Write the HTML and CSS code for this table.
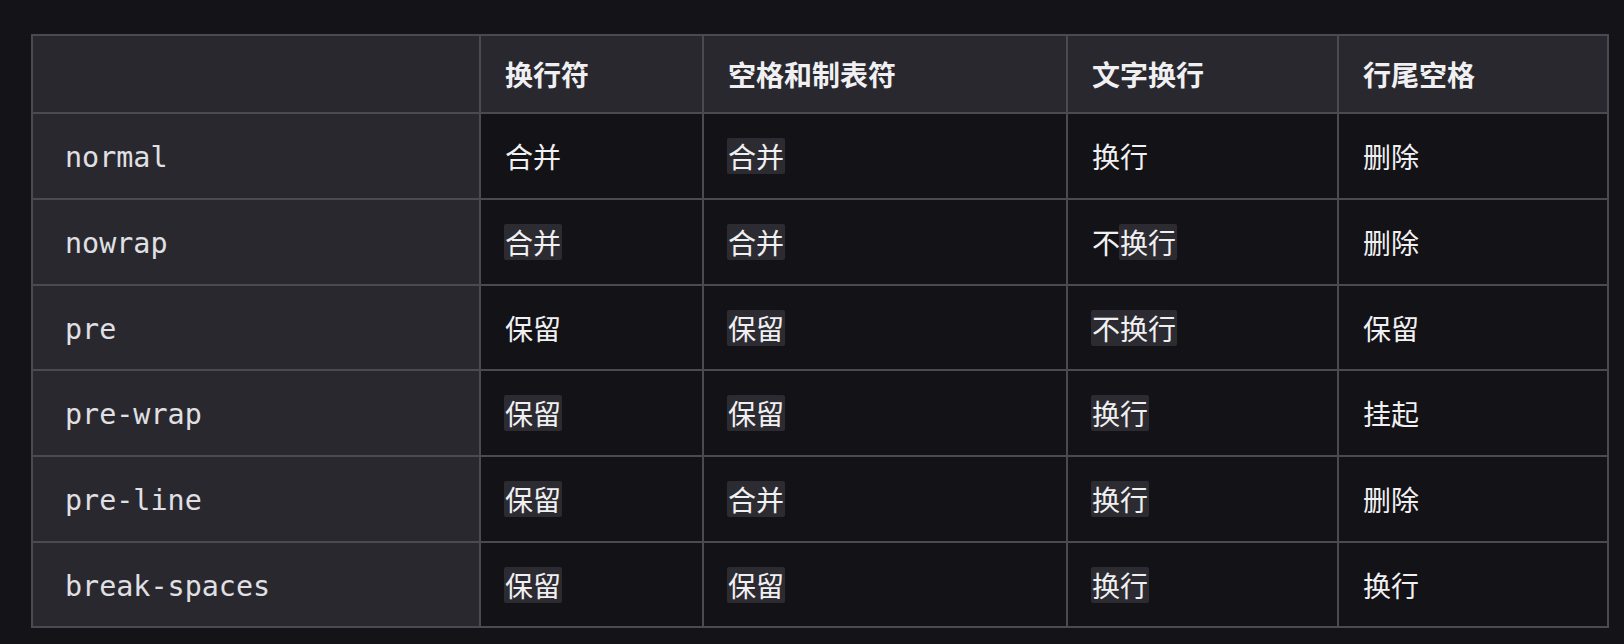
FILE: index.html
```html
<!DOCTYPE html>
<html lang="zh-CN">
<head>
<meta charset="utf-8">
<title>white-space</title>
<link rel="stylesheet" href="styles.css">
</head>
<body>
<div class="page">
  <div class="grid">
    <div class="cell head first"></div>
    <div class="cell head">换行符</div>
    <div class="cell head">空格和制表符</div>
    <div class="cell head">文字换行</div>
    <div class="cell head">行尾空格</div>

    <div class="cell first"><code>normal</code></div>
    <div class="cell">合并</div>
    <div class="cell"><span class="hl">合并</span></div>
    <div class="cell">换行</div>
    <div class="cell">删除</div>

    <div class="cell first"><code>nowrap</code></div>
    <div class="cell"><span class="hl">合并</span></div>
    <div class="cell"><span class="hl">合并</span></div>
    <div class="cell">不<span class="hl">换行</span></div>
    <div class="cell">删除</div>

    <div class="cell first"><code>pre</code></div>
    <div class="cell">保留</div>
    <div class="cell"><span class="hl">保留</span></div>
    <div class="cell"><span class="hl">不换行</span></div>
    <div class="cell">保留</div>

    <div class="cell first"><code>pre-wrap</code></div>
    <div class="cell"><span class="hl">保留</span></div>
    <div class="cell"><span class="hl">保留</span></div>
    <div class="cell"><span class="hl">换行</span></div>
    <div class="cell">挂起</div>

    <div class="cell first"><code>pre-line</code></div>
    <div class="cell"><span class="hl">保留</span></div>
    <div class="cell"><span class="hl">合并</span></div>
    <div class="cell"><span class="hl">换行</span></div>
    <div class="cell">删除</div>

    <div class="cell first"><code>break-spaces</code></div>
    <div class="cell"><span class="hl">保留</span></div>
    <div class="cell"><span class="hl">保留</span></div>
    <div class="cell"><span class="hl">换行</span></div>
    <div class="cell">换行</div>
  </div>
</div>
</body>
</html>
```

FILE: styles.css
```css
html, body {
  margin: 0;
  padding: 0;
  background: #131217;
}

.page {
  width: 1624px;
  height: 644px;
  box-sizing: border-box;
  padding: 34px 15px 0 31px;
  background: #141318;
}

.grid {
  display: grid;
  grid-template-columns: 446px 221px 362px 269px 268px;
  grid-template-rows: 76px 84px 84px 83px 84px 84px 83px;
  gap: 2px;
  padding: 2px;
  background: #4b4a52;
  width: max-content;
}

.cell {
  display: flex;
  align-items: center;
  padding: 0 0 0 24px;
  background: #131217;
  color: #f0f0f2;
  font-family: "Noto Sans CJK SC", "Noto Sans", sans-serif;
  font-size: 28px;
  line-height: 36px;
  white-space: nowrap;
}

.cell.head {
  background: #29282f;
  font-weight: 700;
}

.cell.first {
  background: #29282f;
  padding-left: 32px;
}

.cell code {
  display: inline-block;
  padding-top: 4px;
  font-family: "DejaVu Sans Mono", "Liberation Mono", monospace;
  font-size: 28.4px;
  color: #e0e0e4;
}

.hl {
  display: inline-block;
  background: #2c2b31;
  padding: 0 1px;
  margin-left: -1px;
  border-radius: 2px;
  line-height: 36px;
}
```
